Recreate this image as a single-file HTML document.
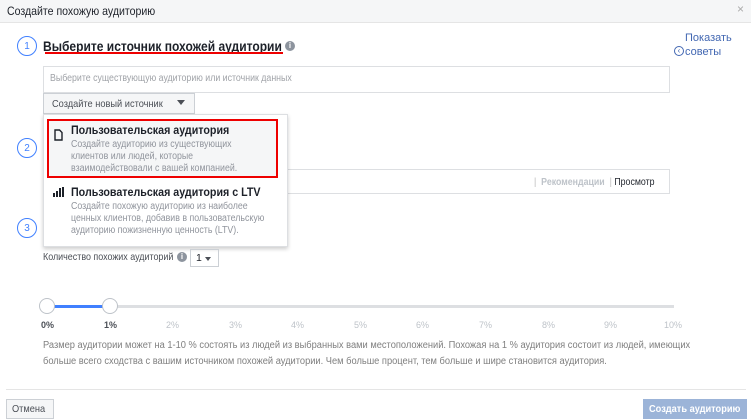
<!DOCTYPE html>
<html><head><meta charset="utf-8"><style>
*{margin:0;padding:0;box-sizing:border-box}
body{width:751px;height:420px;background:#fff;font-family:"Liberation Sans",sans-serif;position:relative;overflow:hidden;color:#1d2129}
.a{position:absolute;white-space:nowrap}
.c{position:absolute;width:20px;height:20px;border:1.5px solid #4080ff;border-radius:50%;color:#4080ff;font-size:10px;display:flex;align-items:center;justify-content:center}
.g{color:#90949c}
.n{transform-origin:0 0;transform:scaleX(.88)}
.info{position:absolute;width:10px;height:10px;border-radius:50%;background:#8d949e;color:#fff;font-size:8px;font-weight:bold;text-align:center;line-height:10px}
</style></head><body>
<div class="a" style="left:0;top:0;width:751px;height:23px;background:#f5f6f7;border-bottom:1px solid #e5e5e5"></div>
<div class="a n" style="left:7px;top:4px;font-size:12px">Создайте похожую аудиторию</div>
<div class="a" style="left:737px;top:2px;font-size:12px;color:#aaa">×</div>

<div class="c" style="left:17px;top:36px">1</div>
<div class="a" style="left:43px;top:38px;font-size:14px;font-weight:bold;transform:scaleX(.86);transform-origin:0 0">Выберите источник похожей аудитории</div>
<div class="a" style="left:45px;top:52px;width:238px;height:2px;background:#e00"></div>
<div class="info" style="left:285px;top:41px">i</div>
<div class="a" style="left:685px;top:32px;font-size:11px;color:#4267b2">Показать</div>
<div class="a" style="left:674px;top:46px;width:10px;height:10px;border:1px solid #4267b2;border-radius:50%;font-size:8px;line-height:8px;text-align:center;color:#4267b2">‹</div>
<div class="a" style="left:685px;top:46px;font-size:11px;color:#4267b2">советы</div>

<div class="a" style="left:43px;top:66px;width:627px;height:27px;border:1px solid #dddfe2"></div>
<div class="a g n" style="left:50px;top:73px;font-size:10px;color:#a0a3a8">Выберите существующую аудиторию или источник данных</div>
<div class="a" style="left:43px;top:93px;width:152px;height:21px;background:#f5f6f7;border:1px solid #ccd0d5"></div>
<div class="a n" style="left:52px;top:98px;font-size:10.5px;color:#4b4f56">Создайте новый источник</div>
<div class="a" style="left:177px;top:100px;border:4px solid transparent;border-top:5px solid #4b4f56;border-bottom:0"></div>

<div class="c" style="left:17px;top:138px">2</div>
<div class="a" style="left:200px;top:169px;width:470px;height:25px;border:1px solid #dddfe2"></div>
<div class="a n" style="left:534px;top:177px;font-size:10px;color:#bbb">|&nbsp; <b style="font-weight:bold;color:#bec3c9">Рекомендации</b> &nbsp;| <span style="color:#1d2129">Просмотр</span></div>

<div class="c" style="left:17px;top:218px">3</div>

<div class="a" style="left:43px;top:114px;width:245px;height:133px;background:#fff;border:1px solid #dddfe2;box-shadow:0 2px 4px rgba(0,0,0,.2)"></div>
<div class="a" style="left:47px;top:119px;width:231px;height:59px;background:#f5f6f7;border:2px solid #e00"></div>
<svg class="a" style="left:54px;top:129px" width="9" height="12" viewBox="0 0 9 12"><path d="M1 1h4.5L8 3.5V11H1z" fill="none" stroke="#1d2129" stroke-width="1.4"/></svg>
<div class="a" style="left:71px;top:125px;font-size:11.5px;font-weight:bold;transform:scaleX(.93);transform-origin:0 0">Пользовательская аудитория</div>
<div class="a g n" style="left:71px;top:139px;font-size:10px;line-height:12px">Создайте аудиторию из существующих<br>клиентов или людей, которые<br>взаимодействовали с вашей компанией.</div>
<svg class="a" style="left:53px;top:187px" width="12" height="10"><rect x="0" y="6" width="2" height="4" fill="#1d2129"/><rect x="3" y="4" width="2" height="6" fill="#1d2129"/><rect x="6" y="1" width="2" height="9" fill="#1d2129"/><rect x="9" y="0" width="2" height="10" fill="#1d2129"/></svg>
<div class="a" style="left:71px;top:187px;font-size:11.5px;font-weight:bold;transform:scaleX(.93);transform-origin:0 0">Пользовательская аудитория с LTV</div>
<div class="a g n" style="left:71px;top:201px;font-size:10px;line-height:12px">Создайте похожую аудиторию из наиболее<br>ценных клиентов, добавив в пользовательскую<br>аудиторию пожизненную ценность (LTV).</div>

<div class="a" style="left:43px;top:251px;font-size:10.5px;color:#4b4f56;transform:scaleX(.85);transform-origin:0 0">Количество похожих аудиторий</div>
<div class="info" style="left:177px;top:252px">i</div>
<div class="a" style="left:190px;top:249px;width:29px;height:18px;border:1px solid #ccd0d5"></div>
<div class="a" style="left:196px;top:252px;font-size:10.5px">1</div>
<div class="a" style="left:205px;top:257px;border:3px solid transparent;border-top:4px solid #4b4f56;border-bottom:0"></div>

<div class="a" style="left:47px;top:305px;width:627px;height:3px;background:#dddfe2"></div>
<div class="a" style="left:47px;top:305px;width:63px;height:3px;background:#4080ff"></div>
<div class="a" style="left:39px;top:298px;width:16px;height:16px;border-radius:50%;background:#fff;border:1px solid #bec3c9"></div>
<div class="a" style="left:102px;top:298px;width:16px;height:16px;border-radius:50%;background:#fff;border:1px solid #bec3c9"></div>
<div style="position:absolute;top:320px;left:0;font-size:9px;color:#bec3c9">
<span class="a" style="left:41px;color:#4b4f56;font-weight:bold">0%</span>
<span class="a" style="left:104px;color:#4b4f56;font-weight:bold">1%</span>
<span class="a" style="left:166px">2%</span><span class="a" style="left:229px">3%</span><span class="a" style="left:291px">4%</span><span class="a" style="left:354px">5%</span><span class="a" style="left:416px">6%</span><span class="a" style="left:479px">7%</span><span class="a" style="left:542px">8%</span><span class="a" style="left:604px">9%</span><span class="a" style="left:664px">10%</span></div>
<div class="a g" style="left:43px;top:338px;font-size:10px;line-height:16px;color:#7f7f7f;transform:scaleX(.93);transform-origin:0 0">Размер аудитории может на 1-10 % состоять из людей из выбранных вами местоположений. Похожая на 1 % аудитория состоит из людей, имеющих<br>больше всего сходства с вашим источником похожей аудитории. Чем больше процент, тем больше и шире становится аудитория.</div>

<div class="a" style="left:6px;top:389px;width:740px;height:1px;background:#e5e5e5"></div>
<div class="a" style="left:6px;top:399px;width:48px;height:20px;background:#f5f6f7;border:1px solid #ccd0d5"></div>
<div class="a n" style="left:12px;top:403px;font-size:10.5px;color:#4b4f56">Отмена</div>
<div class="a" style="left:643px;top:399px;width:104px;height:20px;background:#9cb4d8"></div>
<div class="a n" style="left:649px;top:403px;font-size:10.5px;color:#fff;font-weight:bold">Создать аудиторию</div>
</body></html>
